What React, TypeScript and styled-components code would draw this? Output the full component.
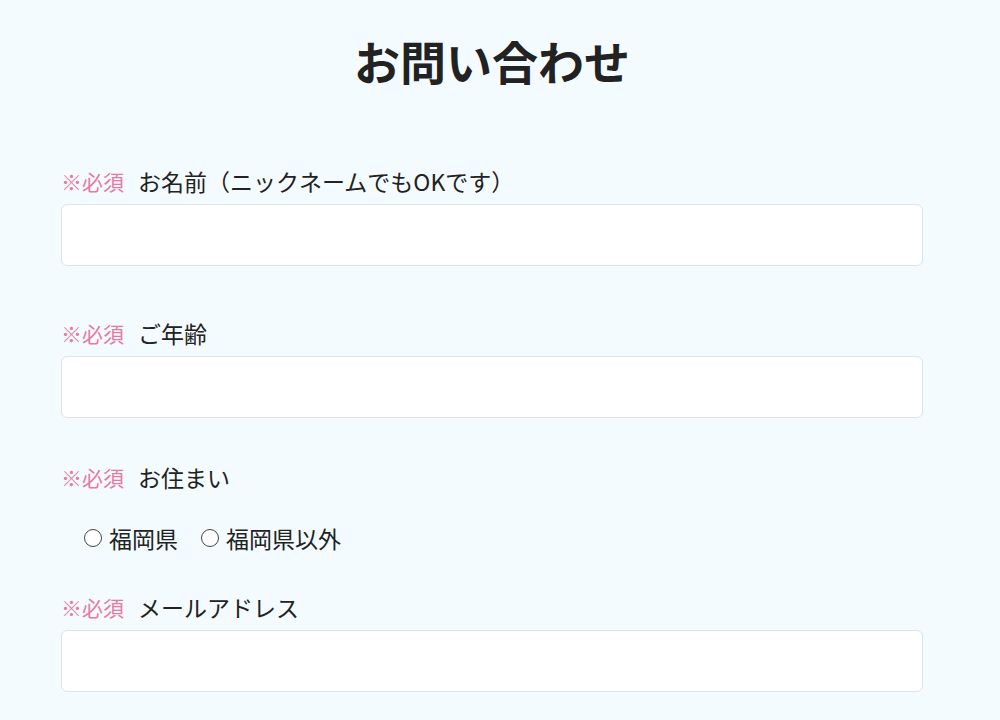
import React from "react";
import styled, { createGlobalStyle } from "styled-components";

const GlobalStyle = createGlobalStyle`
  html, body {
    margin: 0;
    padding: 0;
    background: #f3fbfe;
  }
  body {
    font-family: "Noto Sans CJK JP", "Noto Sans", sans-serif;
    color: #222;
  }
  * { box-sizing: border-box; }
`;

const Page = styled.div`
  width: 862px;
  margin-left: 61px;
  padding-bottom: 20px;
`;

const Title = styled.h1`
  margin: 30px 0 0;
  font-size: 46px;
  line-height: 60px;
  font-weight: 700;
  text-align: center;
  color: #222;
`;

const Form = styled.form`
  display: flex;
  flex-direction: column;
`;

const Field = styled.div<{ $top: number }>`
  display: flex;
  flex-direction: column;
  margin-top: ${(p) => p.$top}px;
`;

const Label = styled.label`
  display: flex;
  align-items: center;
  height: 30px;
  font-size: 23px;
  line-height: 30px;
  color: #222;
`;

const Required = styled.span`
  color: #e97a9f;
  font-size: 21px;
  margin-right: 14px;
`;

const TextInput = styled.input`
  margin-top: 8px;
  width: 100%;
  height: 62px;
  border: 1px solid #dfe3e6;
  border-radius: 6px;
  background: #fff;
  font-size: 20px;
  padding: 0 14px;
  outline: none;
`;

const RadioRow = styled.div`
  display: flex;
  align-items: center;
  height: 30px;
  margin-top: 31px;
  padding-left: 23px;
  gap: 23px;
`;

const RadioOption = styled.label`
  display: flex;
  align-items: center;
  gap: 7px;
  font-size: 23px;
  line-height: 30px;
  color: #222;
`;

const Radio = styled.input`
  appearance: none;
  margin: 0;
  width: 18px;
  height: 18px;
  border: 1px solid #444;
  border-radius: 50%;
  background: #fff;
`;

export default function App() {
  return (
    <>
      <GlobalStyle />
      <Page>
        <Title>お問い合わせ</Title>
        <Form>
          <Field $top={76}>
            <Label>
              <Required>※必須</Required>お名前（ニックネームでもOKです）
            </Label>
            <TextInput type="text" />
          </Field>
          <Field $top={52}>
            <Label>
              <Required>※必須</Required>ご年齢
            </Label>
            <TextInput type="text" />
          </Field>
          <Field $top={44}>
            <Label>
              <Required>※必須</Required>お住まい
            </Label>
          </Field>
          <RadioRow>
            <RadioOption>
              <Radio type="radio" name="area" />
              福岡県
            </RadioOption>
            <RadioOption>
              <Radio type="radio" name="area" />
              福岡県以外
            </RadioOption>
          </RadioRow>
          <Field $top={39}>
            <Label>
              <Required>※必須</Required>メールアドレス
            </Label>
            <TextInput type="email" />
          </Field>
        </Form>
      </Page>
    </>
  );
}
